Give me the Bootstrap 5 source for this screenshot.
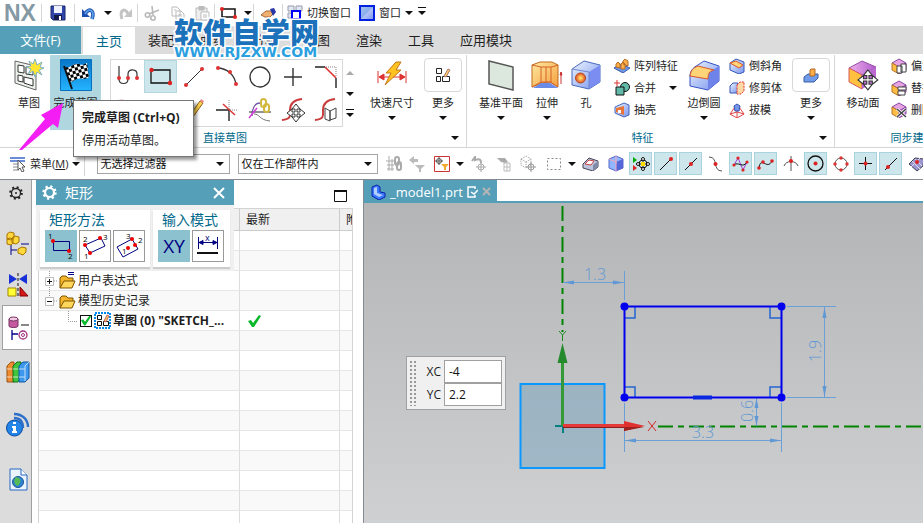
<!DOCTYPE html>
<html lang="zh-CN">
<head>
<meta charset="utf-8">
<meta name="viewport" content="width=device-width, initial-scale=1">
<title>NX - _model1.prt</title>
<link href="https://cdn.jsdelivr.net/npm/bootstrap@5.3.0/dist/css/bootstrap.min.css" rel="stylesheet">
<style>
:root{--teal:#559fb8;--soft:#cde6eb;--ink:#1e1e1e;--group:#00688b}
body{font-family:"Open Sans","Noto Sans CJK SC",sans-serif;font-size:11px;line-height:16px;color:var(--ink);background:#fff}
svg{display:block;flex:none}
button{border:0;background:none;padding:0;color:inherit;font:inherit;white-space:nowrap}
.app{height:100vh;min-height:320px}
.cell{display:flex;align-items:center;justify-content:center;flex:none}
.w10{width:10px}.w24{width:24px}.w28{width:28px}.w32{width:32px}
.tri{display:block;width:0;height:0;flex:none;border:4px solid transparent;border-top-color:#111;border-bottom:0}
.tri-up{border:4px solid transparent;border-bottom-color:#aaa;border-top:0}
.tri-bar{position:relative}
.tri-bar::before{content:"";position:absolute;left:-4px;top:-8px;width:8px;height:1px;background:#111}
.vr-line{width:1px;background:#d5d5d5;flex:none}
.quick{height:26px}
.quick .vr-line{height:18px}
.brand{width:41px;padding-left:4px;font:bold 23px/26px "Liberation Sans",sans-serif;color:#8499a4}
.tabs{height:28px;background:#dcdcdc;font-size:13px}
.tabs button{padding:0 13px;height:28px}
.tabs .file{width:81px;background:var(--teal);color:#fff;margin-right:2px}
.tabs .active{background:#fff;color:var(--group);height:27px;margin-top:1px}
.ribbon{height:94px;border-bottom:1px solid #d5d5d5;padding-top:1px}
.rgroup{border-right:1px solid #d5d5d5;flex:none}
.tools{height:75px}
.foot{color:var(--group);height:16px;padding-right:16px}
.foot .tri{position:absolute;right:7px;top:6px}
.big{display:flex;flex-direction:column;align-items:center;padding-top:4px;height:75px;flex:none}
.big .ico{height:32px;display:flex;align-items:center;justify-content:center}
.big .lab{margin:4px 0 5px}
.b36{width:36px}.b42{width:42px}.b44{width:44px}.b56{width:56px}.b64{width:64px}
.done{width:51px;background:#b0d6e0}
.more{width:38px}
.more .ico{width:38px;height:34px;margin:-1px 0;border:1px solid #d8d8d8;border-radius:4px}
.gallery{display:grid;grid-template-columns:repeat(7,33px);border:1px solid #d8d8d8;height:68px;margin:4px 0 0 9px}
.gallery button{height:33px;display:flex;align-items:center;justify-content:center}
.gallery .on{background:var(--soft);box-shadow:inset 0 0 0 1px #b4d8e0}
.spin{width:13px;height:68px;padding:12px 0 10px;margin-top:4px}
.col-feature{width:75px;padding-left:7px}
.col-detail{width:66px;padding-left:3px}
.col-sync{width:115px}
.lead-in{padding-left:6px}
.small-col button{display:flex;align-items:center;height:22px;gap:4px}
.small-col .tri{margin-left:9px}
.select-bar{height:32px;border-bottom:1px solid #858b91}
.select-bar .vr-line{height:24px}
.pick{position:relative;flex:none}
.pick select{appearance:none;width:100%;height:20px;border:1px solid #a5a5a5;background:#fff;padding:0 2px;font:inherit;line-height:16px;border-radius:0;color:#111}
.pick::after{content:"";position:absolute;right:6px;top:8px;border:4px solid transparent;border-top-color:#111;border-bottom:0}
.pick-a{width:133px}.pick-b{width:140px}
.gap-s{gap:2px}
.tg{width:23px;height:23px;display:flex;align-items:center;justify-content:center;flex:none}
.tg.on{background:var(--soft);border:1px solid #a9d3dd}
.rail{width:32px;background:#dcdcdc;border-right:1px solid #a0a0a0;flex:none;overflow:hidden}
.rail button{width:32px;height:43px;display:flex;align-items:center;justify-content:center;flex:none;padding-left:4px}
.rail .on{background:#fff;border:1px solid #a0a0a0;border-right:0;margin-left:2px;width:30px;height:45px;padding-left:1px}
.rail .gear{height:25px;margin-bottom:18px;padding:0}
.rail .nav-asm{height:41px}
.rail .apart{margin-top:10px}
.side{width:331px;flex:none;position:relative;overflow:hidden;padding-left:6px}
.side-head{height:28px;padding:4px 16px 0 0}
.tree{width:315px;table-layout:fixed;border:1px solid #d3d3d3;font-size:12px;line-height:18px;border-collapse:separate;border-spacing:0;margin:0}
.tree th{height:22px;background:#f0f0f0;font-weight:400;padding:0 6px;border-right:1px solid #ccc;border-bottom:1px solid #ccc;white-space:nowrap;overflow:hidden}
.tree td{height:20px;padding:0;border-right:1px solid #ddd;border-bottom:1px solid #e6e6e6;white-space:nowrap;overflow:hidden}
.tree th:last-child,.tree td:last-child{border-right:0}
.tree tbody tr:nth-child(even) td{background:#f9f9f9}
.c-name{width:201px}.c-new{width:100px}
.chk{appearance:none;width:12px;height:12px;border:1px solid #111;background:#fff;margin:0;display:block;flex:none}
.chk::after{content:"";display:block;width:10px;height:10px;background:#0ab82c;clip-path:polygon(0 50%,22% 38%,40% 62%,85% 0,100% 12%,44% 100%,32% 100%)}
.node{gap:2px;padding-left:2px}
.dlg{position:absolute;left:4px;top:0;width:198px;background:#f0f0f0}
.dlg-head{height:25px;background:var(--teal);color:#fff;font-size:14px;padding:0 9px 0 6px}
.dlg-body{padding:5px 4px 4px;gap:3px}
.opt{background:#fff;box-shadow:0 2px 1px #ccc;height:57px;padding:0 5px}
.opt h2{font-size:14px;line-height:20px;margin:0;padding-left:4px;color:var(--group);font-weight:400}
.opt button{width:32px;height:32px;border:1px solid #999;background:#fff;display:block}
.opt .on{background:#8cc2d0;border-color:#8cc2d0}
.work{border-left:1px solid #858b91;min-width:0}
.doc-tabs{height:23px;border-bottom:2px solid var(--teal)}
.doc-tab{background:var(--teal);color:#fff;font-size:13px;padding:0 6px;gap:4px;height:23px}
.view{background:linear-gradient(#b4b5b7,#cfd0d2);overflow:hidden;position:relative}
.view>svg{position:absolute;width:100%;height:100%}
.coord{position:absolute;left:42px;top:153px;width:100px;background:#f0f0f0;border:1px solid #a0a0a0;padding:3px;font-size:12px}
.coord label{width:34px;text-align:right;padding-right:3px}
.coord input{width:58px;height:23px;border:1px solid #a0a0a0;padding:0 4px;font:inherit;color:#111;min-width:0}
.grip{position:absolute;left:2px;top:3px;width:8px;bottom:3px;background:radial-gradient(circle,#999 1px,transparent 1px) 0 0/4px 4px}
.tip{position:absolute;left:73px;top:100px;border:1px solid #767676;background:#fff;padding:5px 8px;width:121px;height:57px;box-shadow:3px 3px 3px #0006;font-size:12px;line-height:23px;white-space:nowrap}
.pointer{position:absolute;left:18px;top:100px}
.seal{position:absolute;left:174px;top:16px;white-space:nowrap;color:#1b72ba;-webkit-text-stroke:3px #fff;paint-order:stroke fill}
.seal b{display:block;font:900 29px/30px "Noto Sans CJK SC",sans-serif}
.seal i{display:block;font:bold 14px/14px "DejaVu Sans",sans-serif;color:#2ba0e0;margin-top:-1px}
</style>
<script src="https://cdn.jsdelivr.net/npm/bootstrap@5.3.0/dist/js/bootstrap.bundle.min.js"></script>
</head>
<body>
<svg width="0" height="0" class="position-absolute" aria-hidden="true"><defs>
<linearGradient id="gBlue" x2="1" y2="1"><stop stop-color="#edf5ff"/><stop offset="1" stop-color="#7894ee"/></linearGradient>
<linearGradient id="gOr" x2="1" y2="1"><stop stop-color="#ffe9a0"/><stop offset="1" stop-color="#f5a040"/></linearGradient>
<linearGradient id="gSky" y2="1" x2="0"><stop stop-color="#0876c8"/><stop offset="1" stop-color="#25b4ff"/></linearGradient>
<linearGradient id="gPur" x2="1"><stop stop-color="#efb2e8"/><stop offset="1" stop-color="#b15bd0"/></linearGradient>
<radialGradient id="gDot"><stop stop-color="#fff36a"/><stop offset="1" stop-color="#e84b28"/></radialGradient>
<clipPath id="flag"><path d="M5 8c6 2 8-5 14-3 4 2 5 0 8-1l2 14c-6 4-8 0-12 2-3 1-4 4-8 2z"/></clipPath>
<pattern id="chess" width="6" height="6" patternUnits="userSpaceOnUse" patternTransform="rotate(-14)"><path fill="#fff" d="M0 0h6v6H0z"/><path d="M0 0h3v3H0zM3 3h3v3H3z"/></pattern>
<g id="move4"><path d="M9 0l4 5h-3v3h3V5l5 4-5 4v-3h-3v3h3l-4 5-4-5h3v-3H5v3L0 9l5-4v3h3V5H5z" fill="#fff" stroke="#333"/></g>
<g id="cubeP"><path d="M1 5l7-4 7 4-7 4z" fill="#e6a5e2" stroke="#8c49a5"/><path d="M1 5l7 4v7l-7-4z" fill="#ffbd45" stroke="#b97523"/><path d="M8 9l7-4v7l-7 4z" fill="#c885da" stroke="#8c49a5"/></g>
<g id="folder"><path d="M1 14V4l2-2h4l2 2h5v3" fill="#f4b42c" stroke="#7c5400"/><path d="M1 14L5 7h11l-3 7z" fill="#ffd65c" stroke="#7c5400"/></g>
</defs></svg>

<div class="app d-flex flex-column overflow-hidden position-relative">
<header class="quick d-flex align-items-center">
 <div class="brand">NX</div><span class="vr-line"></span>
 <button class="cell w32" aria-label="保存"><svg width="16" height="16"><path d="M1 1h14v14H3l-2-2z" fill="#3046a8" stroke="#18246c"/><path d="M4 1h8v7H4z" fill="#eef2ff"/><path d="M4 10h8v5H4z" fill="#101a48"/><path d="M9 11h2v4H9z" fill="#fff"/></svg></button><span class="vr-line"></span>
 <button class="cell w28" aria-label="撤销"><svg width="16" height="14"><path d="M4 8c4-7 10-4 7 5" fill="none" stroke="#1c4fae" stroke-width="3.6"/><path d="M1 3v8h8z" fill="#1c4fae"/><path d="M4 8c4-7 10-4 7 5" fill="none" stroke="#5ba2ea" stroke-width="1.8"/></svg></button>
 <button class="cell w10" aria-label="撤销列表"><i class="tri"></i></button>
 <button class="cell w24" aria-label="重做"><svg width="15" height="14"><path d="M10 8C7 1 1 4 4 13" fill="none" stroke="#c4c4c4" stroke-width="3"/><path d="M14 3v8H6z" fill="#c4c4c4"/></svg></button><span class="vr-line"></span>
 <button class="cell w28" aria-label="剪切"><svg width="16" height="16" fill="none" stroke="#b9b9b9" stroke-width="1.6"><path d="M8 1l1 9M15 5L5 9"/><circle cx="3.500" cy="10" r="2.200"/><circle cx="9" cy="13" r="2.200"/></svg></button>
 <button class="cell w24" aria-label="复制"><svg width="14" height="14" fill="#fff" stroke="#bbb"><path d="M1 1h5l3 3v6H1zM5 5h5l3 3v6H5z"/><path d="M7 9h4M7 11h4M3 4h2"/></svg></button>
 <button class="cell w24" aria-label="粘贴"><svg width="15" height="15" fill="#eee" stroke="#bbb"><path d="M1 2h11v12H1z"/><path d="M4 0h5v4H4z" fill="#bbb"/><path d="M6 6h8v8H6z" fill="#fff"/><path d="M8 9h4M8 11h4"/></svg></button><span class="vr-line"></span>
 <button class="cell w28" aria-label="矩形"><svg width="18" height="14"><path d="M2 3h13v8H2z" fill="none" stroke="#111" stroke-width="1.500"/><circle cx="2" cy="3" r="2" fill="#d22"/><circle cx="15" cy="11" r="2" fill="#d22"/></svg></button>
 <button class="cell w10" aria-label="矩形列表"><i class="tri"></i></button><span class="vr-line"></span>
 <button class="cell w28" aria-label="触控模式"><svg width="17" height="12"><path d="M1 8l5-4 5 0 2 3-3 3H5z" fill="#f0b070" stroke="#a5693c"/><path d="M10 2l4-1 2 4-3 4z" fill="#2635a8"/></svg></button><span class="vr-line"></span>
 <button class="d-flex align-items-center gap-1 ms-1"><svg width="16" height="16" fill="#dfe8f4" stroke="#99a"><path d="M1 1h6v5H1zM9 1h6v5H9zM1 8h5v5H1z"/><path d="M5 6h8v8H5z" stroke="#00f" fill="#fff" stroke-width="2"/></svg>切换窗口</button>
 <button class="d-flex align-items-center gap-1 ms-2"><svg width="16" height="16"><path d="M1 1h14v14H1z" fill="url(#gBlue)" stroke="#0022e0" stroke-width="2"/><path d="M14 2L2 14V2z" fill="#5f93e0" opacity=".5"/></svg>窗口 <i class="tri"></i></button>
 <button class="cell w10 ms-1" aria-label="工具条选项"><i class="tri tri-bar"></i></button>
</header>

<nav class="tabs d-flex" aria-label="功能区">
 <button class="file">文件(F)</button><button class="active">主页</button><button>装配</button><button>曲线</button><button>分析</button><button>视图</button><button>渲染</button><button>工具</button><button>应用模块</button>
</nav>

<section class="ribbon d-flex overflow-hidden flex-shrink-0">
 <div class="rgroup">
  <div class="tools d-flex ps-2 pe-1">
   <button class="big b42"><span class="ico"><svg width="30" height="32"><path d="M1 2l21 5v24L1 24z" fill="#edf1ec" stroke="#666"/><path d="M4 6l6 1v7l-6-1zM12 8l7 1v7l-7-1zM4 16l5 1v6l-5-1zM10 18l9 2v7l-9-3z" fill="#fff" stroke="#333"/><path d="M21 0l2 6 5-3-2 5 4 1-5 2 3 5-5-3-2 5-2-6-5 3 3-5-5-2 5-1-2-5 4 3z" fill="#ffe733" stroke="#7eb2c5"/></svg></span><span class="lab">草图</span></button>
   <button class="big done"><span class="ico"><svg width="32" height="32"><path d="M.5.5h31v31H.5z" fill="url(#gSky)" stroke="#0870bd"/><g clip-path="url(#flag)"><path d="M0 0h32v32H0z" fill="url(#chess)"/></g><path d="M4 7l8 23" stroke="#111" stroke-width="2"/></svg></span><span class="lab">完成草图</span></button>
   <div class="gallery">
    <button aria-label="轮廓"><svg width="24" height="24" fill="none" stroke="#333"><path d="M3 1v13c0 6 9 6 9 0V9c0-6 9-5 9 0v5" stroke-width="1.2"/><g fill="#d33" stroke="none"><circle cx="3" cy="13" r="2"/><circle cx="12" cy="13" r="2"/><circle cx="21" cy="13" r="2"/></g></svg></button>
    <button class="on" aria-label="矩形"><svg width="24" height="20"><path d="M2 3h19v13H2z" fill="none" stroke="#111" stroke-width="1.300"/><circle cx="2.500" cy="3" r="2.200" fill="#d22"/><circle cx="21" cy="16" r="2.200" fill="#d22"/></svg></button>
    <button aria-label="直线"><svg width="22" height="22"><path d="M3 19L19 3" stroke="#333"/><circle cx="3" cy="19" r="2" fill="#d33"/><circle cx="19" cy="3" r="2" fill="#d33"/></svg></button>
    <button aria-label="圆弧"><svg width="24" height="24"><path d="M2 3c10 0 18 7 19 17" fill="none" stroke="#333" stroke-width="1.300"/><g fill="#d33"><circle cx="3" cy="3" r="2"/><circle cx="15" cy="7" r="2"/><circle cx="21" cy="19" r="2"/></g></svg></button>
    <button aria-label="圆"><svg width="22" height="22"><circle cx="11" cy="11" r="10" fill="none" stroke="#333" stroke-width="1.300"/></svg></button>
    <button aria-label="点"><svg width="18" height="18"><path d="M9 0v18M0 9h18" stroke="#333" stroke-width="1.400"/></svg></button>
    <button aria-label="倒斜角"><svg width="24" height="24" fill="none"><path d="M1 2h10M22 13v10" stroke="#222" stroke-width="1.400"/><path d="M11 2l11 11" stroke="#d33" stroke-width="1.600"/><path d="M12 2h10v10" stroke="#888" stroke-dasharray="1 1"/></svg></button>
    <button aria-label="圆角"><svg width="24" height="24" fill="none"><path d="M1 5h8c9 0 13 4 13 12v5" stroke="#333"/><path d="M2 3c12-1 20 3 20 12" stroke="#d33" stroke-width="2"/></svg></button>
    <button aria-label="派生线"><svg width="24" height="24"><path d="M2 2l18 18" stroke="#333"/></svg></button>
    <button aria-label="快速修剪"><svg width="24" height="24"><path d="M1 3l8 8M2 21l10-3" stroke="#333"/><path d="M8 17L18 3l3 2-10 14-4 1z" fill="#ffd44a" stroke="#8d6420"/><path d="M18 3l1-2 3 2-1 2z" fill="#e88"/></svg></button>
    <button aria-label="快速延伸"><svg width="24" height="24"><path d="M1 12h13M14 12v11" stroke="#222" stroke-width="1.400"/><path d="M8 6l12 11" stroke="#d33" stroke-width="1.500"/><path d="M15 12h8M14 2v10" stroke="#888" stroke-dasharray="1 1"/></svg></button>
    <button aria-label="几何约束"><svg width="24" height="24" fill="none"><path d="M1 14h22" stroke="#222"/><path d="M4 18c0-8 3-13 8-13" stroke="#7156a8" stroke-width="1.300"/><path d="M1 20l8-10" stroke="#d33bd6" stroke-width="1.500"/><path d="M6 16c6 0 5 6 16 7" stroke="#777"/><g stroke="#d3b83e" stroke-width="2"><rect x="13" y="1" width="5" height="8" rx="2.500"/><rect x="16" y="6" width="5" height="8" rx="2.500"/></g></svg></button>
    <button aria-label="移动曲线"><svg width="24" height="24" fill="none"><path d="M1 22c10-1 8-5 8-10S12 2 21 1" stroke="#c93d3d" stroke-width="2"/><g transform="translate(6 6)"><use href="#move4"/></g></svg></button>
    <button aria-label="偏置曲线"><svg width="24" height="24" fill="none"><path d="M1 22c10-1 8-5 8-10S12 2 21 1" stroke="#c93d3d" stroke-width="2"/><path d="M11 10l5 3v10l-5-2zM16 13l6-3v10l-6 2z" fill="#fff" stroke="#444"/></svg></button>
   </div>
   <div class="spin d-flex flex-column align-items-center justify-content-between me-1"><button class="tri-up" aria-label="上一行"></button><button class="tri" aria-label="下一行"></button><button class="tri tri-bar" aria-label="展开"></button></div>
   <button class="big b64"><span class="ico"><svg width="30" height="28"><path d="M1 10v12M29 10v12M2 16h26M2 16l5-3v6zM28 16l-5-3v6z" stroke="#d33" fill="#d33"/><path d="M19 1h5l-5 8h5L8 24l6-12H9z" fill="#ffc321" stroke="#c57718"/></svg></span><span class="lab">快速尺寸</span><i class="tri"></i></button>
   <button class="big more"><span class="ico"><svg width="16" height="16" fill="none" stroke="#222"><path d="M1.500 1.500h5v5h-5zM1.500 9.500h4v5h-4zM7.500 9.500h7v5h-7z"/><path d="M9 9l4-7 2 1-4 7z" fill="#ffc95c" stroke="#a77"/></svg></span><span class="lab">更多</span><i class="tri"></i></button>
  </div>
  <div class="foot text-center position-relative">直接草图<i class="tri"></i></div>
 </div>
 <div class="rgroup">
  <div class="tools d-flex pe-1 lead-in">
   <button class="big b56"><span class="ico"><svg width="28" height="32"><path d="M2 2l24 6v23L2 25z" fill="#dce8de" stroke="#555" stroke-width="1.500"/></svg></span><span class="lab">基准平面</span><i class="tri"></i></button>
   <button class="big b36"><span class="ico"><svg width="32" height="30"><path d="M1 5l8-3h12l6 3v22l-8-5-8 1-10 4z" fill="url(#gOr)" stroke="#c06b1c"/><path d="M1 5l9 2h11l6-2M10 7v16M15 7v15M20 7v16M1 27l9-5h9l8 5" stroke="#d5622a" fill="none"/><path d="M2 28l8-5h9l8 5z" fill="#6a8be6"/><path d="M30 24V12l-1 3h2l-1-3" stroke="#c33" fill="#c33"/></svg></span><span class="lab">拉伸</span><i class="tri"></i></button>
   <button class="big b42"><span class="ico"><svg width="30" height="30"><path d="M1 9L13 1l16 4v17l-11 7-17-4z" fill="url(#gBlue)" stroke="#4968bd"/><path d="M18 12l11-7v17l-11 7z" fill="#7b8df0"/><path d="M1 9l17 3v17" fill="none" stroke="#6b88d2"/><circle cx="9.500" cy="18" r="5" fill="url(#gDot)" stroke="#b54a20"/></svg></span><span class="lab">孔</span></button>
   <div class="small-col col-feature">
    <button><svg width="16" height="14"><path d="M0 9l7-4 9 4-7 5z" fill="#6e97e6" stroke="#3a5cae"/><path d="M2 8V5l2-2 2 2v4zM7 10V5l2-2 2 2v5zM9 5V2l2-2 3 2v5z" fill="#ffb04a" stroke="#b66a20"/></svg>阵列特征</button>
    <button><svg width="16" height="16"><path d="M0 3h6M3 0v6" stroke="#d33"/><circle cx="11" cy="7" r="4.500" fill="#62b9a9" stroke="#111"/><path d="M2 7h8v8H2z" fill="#62b9a9" stroke="#111"/></svg>合并<i class="tri"></i></button>
    <button><svg width="16" height="16"><path d="M1 5l9-4 5 2v10l-5 2-9-4z" fill="url(#gBlue)" stroke="#46b"/><path d="M2 6l8-2v9l-8-3z" fill="#e87535"/><path d="M4 8h3v3H4z" fill="#fff"/></svg>抽壳</button>
   </div>
   <button class="big b44"><span class="ico"><svg width="31" height="31"><path d="M1 15Q2 8 9 5L15 1l15 5v15L19 30 1 26z" fill="url(#gBlue)" stroke="#3653c6"/><path d="M19 30V18q0-5 5-8l6-4v15z" fill="#6d83e9"/><path d="M1 16c1-6 3-8 8-10l16 4c-5 1-6 4-6 9z" fill="#ffd478" stroke="#d8552b"/></svg></span><span class="lab">边倒圆</span><i class="tri"></i></button>
   <div class="small-col col-detail">
    <button><svg width="16" height="16"><path d="M1 5l6-4 8 3v10l-5 2-9-4z" fill="url(#gBlue)" stroke="#3456b5"/><path d="M1 5l6-2 7 4-4 3z" fill="#ffd478" stroke="#d8552b"/></svg>倒斜角</button>
    <button><svg width="16" height="14"><path d="M1 5l3-3h5v10H1z" fill="url(#gBlue)" stroke="#3456b5"/><path d="M8 4l3-3h4v9l-3 3H8z" fill="#ffd9a5" stroke="#d33" stroke-dasharray="2 1"/></svg>修剪体</button>
    <button><svg width="16" height="15"><path d="M1 11l5-7h4l5 7-7 4zM8 2v13M1 11l7-2 7 2" fill="#fff" stroke="#d44"/><path d="M5 3l3-2 3 2-1 5H6z" fill="#7595ea" stroke="#3553b0"/></svg>拔模</button>
   </div>
   <button class="big more"><span class="ico"><svg width="16" height="16"><path d="M1 10l4-3h10v4l-4 4H1z" fill="#6f9be8" stroke="#365ca8"/><path d="M7 3l1-1h4v6l-1 1H7z" fill="#ffae4b" stroke="#b56820"/></svg></span><span class="lab">更多</span><i class="tri"></i></button>
  </div>
  <div class="foot text-center position-relative">特征<i class="tri"></i></div>
 </div>
 <div class="rgroup">
  <div class="tools d-flex">
   <button class="big b56"><span class="ico"><svg width="31" height="31"><path d="M1 8L14 1l14 6-14 8z" fill="url(#gPur)" stroke="#9450a5"/><path d="M1 8l13 7v14L1 22z" fill="#ffc13f" stroke="#d65a65"/><path d="M14 15l14-8v14l-14 8z" fill="#bb69d1"/><g transform="translate(10 10) scale(1.1)"><use href="#move4"/></g></svg></span><span class="lab">移动面</span></button>
   <div class="small-col col-sync">
    <button><svg width="16" height="16"><use href="#cubeP"/><path d="M6 8h5v7H6zM10 6h5v8h-5z" fill="#fff" stroke="#444"/></svg>偏置区域</button>
    <button><svg width="16" height="16"><use href="#cubeP"/><path d="M7 7h8v3H7zM7 11h7v4H7z" fill="#fff" stroke="#444"/></svg>替换面</button>
    <button><svg width="16" height="16"><use href="#cubeP"/><path d="M6 7l9 8M15 7l-9 8" stroke="#fff" stroke-width="3"/><path d="M6 7l9 8M15 7l-9 8" stroke="#444" stroke-width="1.500"/></svg>删除面</button>
   </div>
  </div>
  <div class="foot text-center">同步建模</div>
 </div>
</section>

<section class="select-bar d-flex align-items-center flex-shrink-0 overflow-hidden" aria-label="选择条">
 <button class="d-flex align-items-center gap-1 ms-2"><svg width="18" height="16"><path d="M2 2h15M2 5h15" stroke="#6b8dd8" stroke-width="2"/><path d="M5 8h5M5 11h5M5 14h6" stroke="#888"/><path d="M10 4v10l2-2 2 4 2-1-2-4h3z" fill="#fff" stroke="#555"/></svg><span>菜单(<u>M</u>)</span><i class="tri"></i></button>
 <span class="vr-line ms-1 me-2"></span>
 <div class="pick pick-a ms-1 me-2"><select aria-label="类型过滤器"><option>无选择过滤器</option></select></div>
 <div class="pick pick-b me-1"><select aria-label="选择范围"><option>仅在工作部件内</option></select></div>
 <div class="d-flex align-items-center gap-s">
  <div class="d-flex">
   <button class="tg" aria-label="约束导航"><svg width="16" height="16" fill="none" stroke="#aaa"><path d="M3 0v15M0 5h8M1 9h7M1 13h7M6 3v12"/><rect x="9" y="1" width="4" height="8" rx="2" stroke-width="2"/><rect x="11" y="6" width="4" height="8" rx="2" stroke-width="2"/></svg></button>
   <button class="tg" aria-label="重置过滤器"><svg width="16" height="16" fill="#bbb"><path d="M0 4l5-4v3h4v3H5v2zM6 9h10l-4 4v3h-2v-3z"/></svg></button>
  </div>
  <button class="tg" aria-label="选择过滤"><svg width="16" height="16"><path d="M.5.500h15v15H.5z" fill="#fff" stroke="#c33"/><circle cx="5" cy="5" r="2.500" fill="none" stroke="#555"/><path d="M5 1v8M1 5h8" stroke="#555"/><path d="M7 8h8l-3 3v3h-2v-3z" fill="#f3a92b"/></svg></button>
  <button class="cell w10" aria-label="过滤列表"><i class="tri"></i></button>
  <button class="tg" aria-label="取消全选"><svg width="16" height="16" fill="none" stroke="#aaa"><path d="M1 5l3-4v3c5-2 6 0 6 3" stroke-width="2"/><circle cx="10" cy="11" r="3"/><path d="M10 6v10M5 11h10"/></svg></button>
  <button class="tg" aria-label="全部选择"><svg width="16" height="16"><path d="M1 2h8l3 4-3 1-4-1z" fill="#aaa"/><path d="M8 7h6v8H8zM8 11h6M11 7v8" fill="none" stroke="#bbb"/></svg></button>
  <button class="tg" aria-label="查找组件"><svg width="17" height="17" fill="none" stroke="#999"><path d="M1 4l5-3 5 3v6l-5 3-5-3zM1 4l5 3 5-3M6 7v6" stroke-dasharray="1 1"/><circle cx="11" cy="12" r="3"/><path d="M11 7v10M6 12h10"/></svg></button>
  <button class="tg" aria-label="矩形选择"><svg width="16" height="14"><path d="M1.500 1.500h13v11h-13z" fill="none" stroke="#888" stroke-dasharray="2 2"/></svg></button>
  <button class="cell w10" aria-label="选择方式列表"><i class="tri"></i></button>
  <button class="tg" aria-label="面规则"><svg width="17" height="14"><path d="M1 7l6-6 9 3v6l-5 4-10-3z" fill="#bbc4dc" stroke="#445"/><path d="M11 8l5-4v6l-5 4z" fill="#8089a8"/><path d="M3 7l4-4 5 1-3 4z" fill="#fff" stroke="#c44"/></svg></button>
  <button class="tg" aria-label="着色"><svg width="16" height="17"><path d="M1 4l7-3 7 3v9l-7 3-7-3z" fill="#8fb6ff" stroke="#5868ca"/><path d="M8 7l7-3v9l-7 3z" fill="#5566d8"/><path d="M1 4l7 3v9M8 1v8" fill="none" stroke="#f4a5b8"/></svg></button>
  <button class="tg on" aria-label="启用捕捉点"><svg width="18" height="14"><path d="M1 0l4 3-4 3z" fill="#0a0"/><path d="M1 8l4 3-4 3z" fill="#d22"/><path d="M4 7h13M11 1v12" stroke="#111"/><circle cx="11" cy="7" r="4" fill="none" stroke="#111"/><path d="M9 5h4v4H9z" fill="#fd0"/><g fill="#fff" stroke="#111"><circle cx="11" cy="2" r="1.500"/><circle cx="11" cy="12" r="1.500"/><circle cx="6" cy="7" r="1.500"/><circle cx="16" cy="7" r="1.500"/></g></svg></button>
  <button class="tg on" aria-label="端点"><svg width="16" height="16"><path d="M2 14L13 3" stroke="#111"/><circle cx="13" cy="3" r="2" fill="#d22"/></svg></button>
  <button class="tg on" aria-label="中点"><svg width="16" height="16"><path d="M2 14L14 2" stroke="#111"/><circle cx="8" cy="8" r="2" fill="#d22"/></svg></button>
  <button class="tg" aria-label="控制点"><svg width="16" height="16"><path d="M1 1c10 0 3 14 13 14" fill="none" stroke="#555"/><circle cx="7.500" cy="8" r="2" fill="#d22"/></svg></button>
  <button class="tg on" aria-label="交点"><svg width="17" height="16"><path d="M2 9l4-7 5 12 4-8" fill="none" stroke="#a33bd8"/><path d="M2 9c4-4 9 4 13-3" fill="none" stroke="#111"/><g fill="#d22"><circle cx="2" cy="9" r="1.600"/><circle cx="6" cy="2" r="1.600"/><circle cx="11" cy="14" r="1.600"/><circle cx="15" cy="6" r="1.600"/></g></svg></button>
  <button class="tg on" aria-label="样条极点"><svg width="17" height="14"><path d="M2 11C4-2 10 14 15 4" fill="none" stroke="#111"/><g fill="#d22"><circle cx="2" cy="11" r="1.800"/><circle cx="6" cy="5" r="1.800"/><circle cx="15" cy="4" r="1.800"/></g></svg></button>
  <button class="tg" aria-label="曲线交点"><svg width="16" height="15"><path d="M1 10c2-6 12-6 14 0M8 0v15" fill="none" stroke="#555"/><circle cx="8" cy="5" r="2" fill="#d22"/></svg></button>
  <button class="tg on" aria-label="圆心"><svg width="17" height="17"><circle cx="8.500" cy="8.500" r="7.500" fill="none" stroke="#111" stroke-width="1.300"/><circle cx="8.500" cy="8.500" r="2" fill="#d22"/></svg></button>
  <button class="tg" aria-label="象限点"><svg width="16" height="16"><circle cx="8" cy="8" r="6" fill="none" stroke="#555"/><g fill="#d33"><circle cx="8" cy="2" r="1.700"/><circle cx="8" cy="14" r="1.700"/><circle cx="2" cy="8" r="1.700"/><circle cx="14" cy="8" r="1.700"/></g></svg></button>
  <button class="tg on" aria-label="现有点"><svg width="15" height="15"><path d="M7.500 1v13M1 7.500h13" stroke="#111"/><circle cx="7.500" cy="7.500" r="2" fill="#d22"/></svg></button>
  <button class="tg on" aria-label="曲线上的点"><svg width="16" height="16"><path d="M2 14L14 2" stroke="#111"/><circle cx="5" cy="11" r="2" fill="#d22"/></svg></button>
  <button class="tg" aria-label="面上的点"><svg width="16" height="16"><path d="M1 8l6-6 9 1-1 7-6 5z" fill="#9a96d0" stroke="#445"/><path d="M4 5l8 8M7 3l7 7M3 11l9-9" stroke="#dde"/><circle cx="9" cy="6" r="2" fill="#d22"/></svg></button>
 </div>
</section>

<main class="d-flex flex-fill" style="min-height:0">
 <nav class="rail d-flex flex-column" aria-label="资源条">
  <button class="gear" aria-label="选项"><svg width="14" height="14"><circle cx="7" cy="7" r="4.500" fill="none" stroke="#222" stroke-width="1.300"/><circle cx="7" cy="7" r="5.800" fill="none" stroke="#222" stroke-width="2" stroke-dasharray="2 2.550"/><circle cx="7" cy="7" r="1" fill="#222"/></svg></button>
  <button class="nav-asm" aria-label="装配导航器"><svg width="24" height="26"><path d="M5 12v12M5 19h6M15 13h8" stroke="#008"/><g fill="#ffd83e" stroke="#a97500"><path d="M1 3l3-2 4 1v5l-3 2-4-1zM6 7l3-2 4 1v5l-3 2-4-1zM1 8l3-1 3 1v4l-2 2-4-1zM12 18l4-2 4 1v4l-3 3-5-2z"/></g></svg></button>
  <button class="nav-asm" aria-label="约束导航器"><svg width="22" height="24"><path d="M2 1v10l8-5zM20 1v10l-8-5z" fill="#1730d8"/><path d="M11 0v24" stroke="#111" stroke-dasharray="3 2"/><path d="M1 15h8v8H1z" fill="#ff3" stroke="#a80"/><path d="M13 14v9h8z" fill="#d41818" stroke="#800"/></svg></button>
  <button class="on" aria-label="部件导航器"><svg width="23" height="26"><path d="M2 4v7c0 2 9 2 9 0V4" fill="#c65aa0" stroke="#723060"/><ellipse cx="6.500" cy="4" rx="4.500" ry="2" fill="#f1c8e2" stroke="#723060"/><path d="M14 10h8" stroke="#111"/><path d="M5 15v10M5 19h6" stroke="#008" stroke-width="1.300"/><circle cx="16" cy="20" r="4" fill="none" stroke="#a03480" stroke-width="1.300"/><circle cx="16" cy="20" r="1.500" fill="none" stroke="#a03480"/></svg></button>
  <button aria-label="重用库"><svg width="24" height="22"><path d="M1 5l4-4h3v20H1z" fill="#ed8b2e" stroke="#9b5312"/><path d="M7 5l4-4h4v16l-3 4H7z" fill="#40c43e" stroke="#126e1c"/><path d="M13 5l4-4h6v16l-4 4h-6z" fill="#3c98ed" stroke="#1258a4"/><path d="M1 8h5M1 16h5M7 8h5M7 16h5M13 8h6M13 16h6M19 5v15M19 5l4-4" stroke="#fff" opacity=".7"/></svg></button>
  <button class="apart" aria-label="HD3D 工具"><svg width="24" height="25"><circle cx="8.500" cy="16" r="8" fill="#2385e8" stroke="#0a4a9e"/><path d="M7 10h3v2H7zM6 14h4v5h1v2H6v-2h1v-3H6z" fill="#fff"/><path d="M8 6c6 0 9 4 9 10M8 2c9 0 14 6 14 13" fill="none" stroke="#2e6fc9" stroke-width="2.400"/></svg></button>
  <button class="apart pt-1" aria-label="Web 浏览器"><svg width="19" height="23"><path d="M1 1h11l6 6v15H1z" fill="#eaf4ff" stroke="#2866c0"/><path d="M12 1v6h6" fill="#fff" stroke="#2866c0"/><circle cx="9" cy="14" r="5.500" fill="#2c83cf" stroke="#19569a"/><path d="M7 9c6 1 5 5 2 9-4-1-5-6-2-9z" fill="#57bb55"/></svg></button>
  <button class="pt-3" aria-label="历史记录"><svg width="18" height="12"><ellipse cx="9" cy="6" rx="8" ry="5" fill="#ccc" stroke="#666"/></svg></button>
 </nav>

 <aside class="side">
  <div class="side-head d-flex align-items-center justify-content-end"><button aria-label="最大化"><svg width="13" height="12"><path d="M.5 1h12v10.500H.5z" fill="#fff" stroke="#111"/><path d="M0 1h13" stroke="#111" stroke-width="2"/></svg></button></div>
  <table class="tree">
   <colgroup><col class="c-name"><col class="c-new"><col></colgroup>
   <thead><tr><th>名称</th><th>最新</th><th>附注</th></tr></thead>
   <tbody>
    <tr><td></td><td></td><td></td></tr>
    <tr><td></td><td></td><td></td></tr>
    <tr><td><div class="d-flex align-items-center"><svg width="39" height="19"><path d="M10.500 0v19M15 10h4" stroke="#999" stroke-dasharray="1 1"/><path d="M6.500 6.500h8v8h-8z" fill="#fff" stroke="#bbb"/><path d="M8 10.500h5M10.500 8v5" stroke="#111"/><g transform="translate(20 3)"><use href="#folder"/><path d="M9 -1.500h6M9 .5h6" stroke="#008"/></g></svg>用户表达式</div></td><td></td><td></td></tr>
    <tr><td><div class="d-flex align-items-center"><svg width="39" height="19"><path d="M10.500 0v6M15 10h4" stroke="#999" stroke-dasharray="1 1"/><path d="M6.500 6.500h8v8h-8z" fill="#fff" stroke="#bbb"/><path d="M8 10.500h5" stroke="#111"/><g transform="translate(20 3)"><use href="#folder"/></g></svg>模型历史记录</div></td><td></td><td></td></tr>
    <tr><td><div class="d-flex align-items-center"><svg width="41" height="19"><path d="M29.500 0v10.500H39" fill="none" stroke="#999" stroke-dasharray="1 1"/></svg><input class="chk" type="checkbox" id="sk0" checked><label for="sk0" class="node d-flex align-items-center fw-bold"><svg width="17" height="17"><path d="M1 1h15v15H1z" fill="#fff" stroke="#0089e8" stroke-width="2" stroke-dasharray="2 1"/><path d="M3.500 3.500h4v4h-4zM3.500 9.500h4v4h-4zM9.500 9.500h5v4h-5z" fill="none" stroke="#111"/><path d="M10 9l3-6 2 1-3 6z" fill="#ffc95c" stroke="#b66"/></svg>草图 (0) "SKETCH_...</label></div></td><td class="ps-2"><svg width="13" height="12"><path d="M0 6l3-1 2 3 6-8 2 1-7 11H4z" fill="#0ab82c"/></svg></td><td></td></tr>
    <tr><td></td><td></td><td></td></tr><tr><td></td><td></td><td></td></tr><tr><td></td><td></td><td></td></tr><tr><td></td><td></td><td></td></tr><tr><td></td><td></td><td></td></tr><tr><td></td><td></td><td></td></tr><tr><td></td><td></td><td></td></tr><tr><td></td><td></td><td></td></tr><tr><td></td><td></td><td></td></tr><tr><td></td><td></td><td></td></tr><tr><td></td><td></td><td></td></tr>
   </tbody>
  </table>
  <section class="dlg" aria-label="矩形">
   <div class="dlg-head d-flex align-items-center gap-2"><svg width="15" height="15"><circle cx="7.500" cy="7.500" r="4.500" fill="none" stroke="#fff" stroke-width="2.200"/><circle cx="7.500" cy="7.500" r="6" fill="none" stroke="#fff" stroke-width="2.400" stroke-dasharray="2.200 2.510"/></svg><span>矩形</span><button class="ms-auto" aria-label="关闭"><svg width="12" height="12"><path d="M1 1l10 10M11 1L1 11" stroke="#fff" stroke-width="2"/></svg></button></div>
   <div class="dlg-body d-flex">
    <div class="opt"><h2>矩形方法</h2><div class="d-flex gap-s">
     <button class="on" aria-label="按 2 点"><svg width="30" height="30"><path d="M7.500 10.500h16v9h-16z" fill="none" stroke="#000080"/><circle cx="7" cy="10" r="2" fill="#e00"/><circle cx="23" cy="20" r="2" fill="#e00"/><text x="2" y="8" font-size="8">1</text><text x="22" y="28" font-size="8">2</text></svg></button>
     <button aria-label="按 3 点"><svg width="30" height="30"><path d="M5 14l16-7 4 8-15 7z" fill="none" stroke="#000080"/><g fill="#e00"><circle cx="5" cy="14" r="2"/><circle cx="20" cy="7" r="2"/><circle cx="10" cy="22" r="2"/></g><text x="3" y="11" font-size="8">2</text><text x="23" y="9" font-size="8">3</text><text x="4" y="28" font-size="8">1</text></svg></button>
     <button aria-label="从中心"><svg width="30" height="30"><path d="M3 16l15-8 6 10-15 8z" fill="none" stroke="#000080"/><g fill="#e00"><circle cx="18" cy="8" r="2"/><circle cx="21" cy="14" r="2"/><circle cx="14" cy="17" r="2"/></g><text x="12" y="8" font-size="8">3</text><text x="24" y="12" font-size="8">2</text><text x="8" y="23" font-size="8">1</text></svg></button>
    </div></div>
    <div class="opt flex-fill"><h2>输入模式</h2><div class="d-flex gap-s">
     <button class="on" aria-label="坐标模式"><svg width="30" height="30"><text x="15" y="22" text-anchor="middle" font-size="19" fill="#000080">XY</text></svg></button>
     <button aria-label="参数模式"><svg width="30" height="30"><path d="M5.500 6v12M24.500 6v12M6 11.500h18M6 11.500l4-2v4zM24 11.500l-4-2v4z" stroke="#000080" fill="#000080"/><path d="M4 22h21" stroke="#111" stroke-width="2"/><text x="12" y="10" font-size="9" fill="#000080">x</text></svg></button>
    </div></div>
   </div>
  </section>
 </aside>

 <section class="work flex-fill d-flex flex-column">
  <div class="doc-tabs d-flex flex-shrink-0"><div class="doc-tab d-flex align-items-center"><svg width="16" height="16"><path d="M2 3l5-2 3 2v5l5 1v4l-6 3-7-4z" fill="#3a78ff" stroke="#0a22a8"/><path d="M4 4l3-1v6l6 2-4 2-5-3z" fill="#b5d0ff"/></svg><span>_model1.prt</span><svg width="11" height="12" fill="none" stroke="#fff" stroke-width="1.500"><path d="M8 9v2H1V1h7v2M4 6l3 2 4-4"/></svg><button aria-label="关闭部件"><svg width="9" height="9"><path d="M1 1l7 7M8 1L1 8" stroke="#b5b5b5" stroke-width="2"/></svg></button></div></div>
  <div class="view flex-fill">
   <svg role="img" aria-label="草图视图"><g transform="translate(-364 -203)">
    <g stroke="#008400" stroke-width="2" stroke-dasharray="15 5 6 5"><path d="M562.500 206v126"/><path d="M658 426.500h900"/></g>
    <path d="M520.500 384h84v84h-84z" fill="#2f86b4" fill-opacity=".27" stroke="#0a98ff" stroke-width="2"/>
    <g stroke="#6b9fd8" fill="none"><path d="M624.500 271v29M563 282.500h61M624.500 403v49M781.500 403v49M624 440.500h157M787 306.500h49M787 397.500h49M824.500 307v90M756.500 398v28"/>
     <g fill="#5f98d4" stroke="none"><path d="M563 282.500l11-2v4zM624 282.500l-11-2v4zM625 440.500l11-2v4zM781 440.500l-11-2v4zM824.500 307l-2 11h4zM824.500 397l-2-11h4zM756.500 398l-2 10h4zM756.500 426l-2-10h4z"/></g></g>
    <g fill="#5f98d4" font-size="16" font-weight="300" text-anchor="middle"><text x="595" y="280">1.3</text><text x="703" y="438">3.3</text><text transform="translate(821 351) rotate(-90)">1.9</text><text transform="translate(753 411) rotate(-90)">0.6</text></g>
    <g fill="none" stroke="#2465d0" stroke-width="1.500"><path d="M625 318h10v-11M781 318h-11v-11M625 387h10v11M781 387h-11v11"/></g>
    <path d="M624.500 306.500h157v91h-157z" fill="none" stroke="#00e" stroke-width="2"/>
    <path d="M693 397.500h19" stroke="#0a28e0" stroke-width="4"/>
    <g fill="#00e"><circle cx="624.500" cy="306.500" r="4"/><circle cx="781.500" cy="306.500" r="4"/><circle cx="624.500" cy="397.500" r="4"/><circle cx="781.500" cy="397.500" r="4"/></g>
    <path d="M555 426h8v7" fill="none" stroke="#008080" stroke-width="2"/>
    <path d="M562.500 426v-66" stroke="#349a38" stroke-width="3"/><path d="M562.500 343l5 20h-10z" fill="#258a2c"/>
    <path d="M563 426h64" stroke="#e53a3a" stroke-width="4"/><path d="M563 427.500h64" stroke="#8b1d1d"/><path d="M624 421l21 5-21 5z" fill="#df2f2f"/><path d="M624 427h20l-20 4z" fill="#9e2020"/>
    <path d="M559 331l3.500 4 3.500-4M562.500 335v6" fill="none" stroke="#1c8b1c"/><path d="M648 421l8 10M656 421l-8 10" stroke="#d32626"/>
   </g></svg>
   <form class="coord"><span class="grip"></span>
    <div class="d-flex align-items-center"><label for="xc">XC</label><input id="xc" value="-4"></div>
    <div class="d-flex align-items-center"><label for="yc">YC</label><input id="yc" value="2.2"></div>
   </form>
  </div>
 </section>
</main>

<div class="tip" role="tooltip"><b>完成草图 (Ctrl+Q)</b><div>停用活动草图。</div></div>
<svg class="pointer" width="48" height="52"><path d="M1 50l26-31-4-4 22-12-5 25-5-4L4 50z" fill="#f41df4"/></svg>
<div class="seal"><b>软件自学网</b><i>WWW.RJZXW.COM</i></div>
</div>
</body>
</html>
